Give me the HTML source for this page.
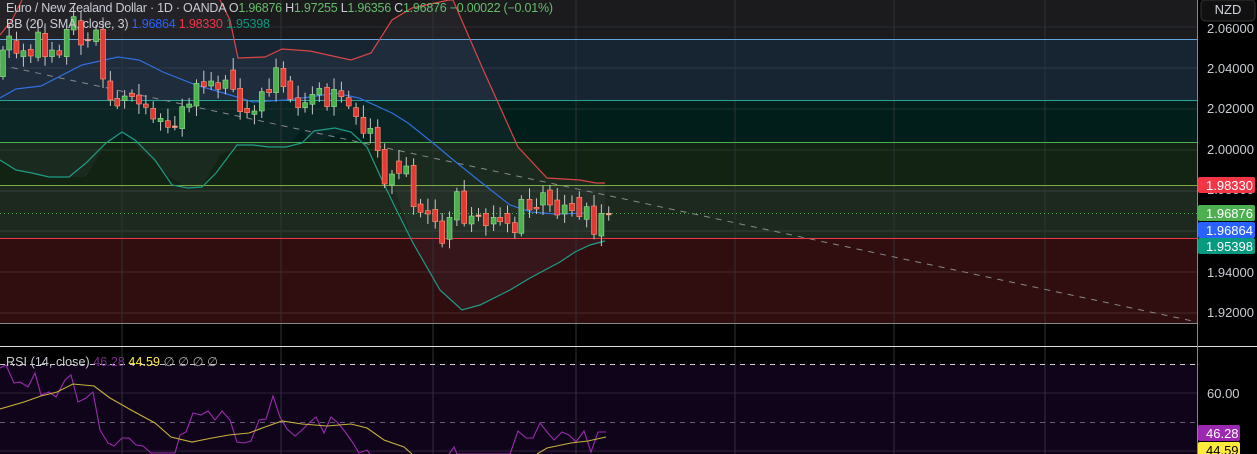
<!DOCTYPE html>
<html><head><meta charset="utf-8"><style>
html,body{margin:0;padding:0;background:#000;width:1257px;height:454px;overflow:hidden;font-family:"Liberation Sans",sans-serif}
svg{position:absolute;left:0;top:0}
.t{font-family:"Liberation Sans",sans-serif;font-size:13px}
.l{font-family:"Liberation Sans",sans-serif;font-size:12.5px}
</style></head><body>
<svg id="s" width="1257" height="454" xmlns="http://www.w3.org/2000/svg">
<rect x="0" y="0" width="1198" height="39" fill="#1b1b1d"/>
<rect x="0" y="39" width="1198" height="61" fill="#172533"/>
<rect x="0" y="100" width="1198" height="42" fill="#021e1b"/>
<rect x="0" y="142" width="1198" height="43" fill="#132313"/>
<rect x="0" y="185" width="1198" height="53" fill="#1d291e"/>
<rect x="0" y="238" width="1198" height="85" fill="#300e10"/>
<rect x="0" y="323" width="1198" height="23" fill="#000"/>
<rect x="0" y="364" width="1198" height="90" fill="#10041a"/>
<polygon fill="#8080a0" fill-opacity="0.08" points="0,0 220,0 230,20 238,58 265,57 282,49 310,51 351,60 371,53 392,20 412,8 449,0 453,0 482,67 518,147 547,178 580,180 596,183 605,183 605,241 590,245 575,252 560,262 545,270 530,278 510,290 480,305 462,310 440,290 413,243 395,190 368,131 352,129 330,137 314,145 302,130 286,148 269,147 237,146 220,155 202,187 188,188 170,177 122,132 106,143 86,177 49,177 32,173 16,170 0,160"/>
<g stroke-width="1">
<line x1="0" y1="27" x2="1198" y2="27" stroke="#2a2e39"/>
<line x1="0" y1="68" x2="1198" y2="68" stroke="#2d3a48"/>
<line x1="0" y1="109" x2="1198" y2="109" stroke="#1d3330"/>
<line x1="0" y1="150" x2="1198" y2="150" stroke="#2a3a2a"/>
<line x1="0" y1="191" x2="1198" y2="191" stroke="#354035"/>
<line x1="0" y1="231" x2="1198" y2="231" stroke="#354035"/>
<line x1="0" y1="272" x2="1198" y2="272" stroke="#4a2a2c"/>
<line x1="0" y1="313" x2="1198" y2="313" stroke="#4a2a2c"/>
<line x1="0" y1="393" x2="1198" y2="393" stroke="#2c2238"/>
<line x1="0" y1="451" x2="1198" y2="451" stroke="#2c2238"/>
<g stroke="#2f3236"><line x1="122" y1="0" x2="122" y2="454"/><line x1="281" y1="0" x2="281" y2="454"/><line x1="433" y1="0" x2="433" y2="454"/><line x1="576" y1="0" x2="576" y2="454"/><line x1="735" y1="0" x2="735" y2="454"/><line x1="894" y1="0" x2="894" y2="454"/><line x1="1045" y1="0" x2="1045" y2="454"/></g>
<line x1="0" y1="39.5" x2="1198" y2="39.5" stroke="#64a5e0"/>
<line x1="0" y1="100.5" x2="1198" y2="100.5" stroke="#26a69a"/>
<line x1="0" y1="142.5" x2="1198" y2="142.5" stroke="#4caf50"/>
<line x1="0" y1="185.5" x2="1198" y2="185.5" stroke="#8bc34a" stroke-opacity="0.85"/>
<line x1="0" y1="238.5" x2="1198" y2="238.5" stroke="#f23645"/>
<line x1="0" y1="323.5" x2="1198" y2="323.5" stroke="#888"/>
<line x1="0" y1="346.5" x2="1257" y2="346.5" stroke="#ddd"/>
<line x1="0" y1="364.5" x2="1198" y2="364.5" stroke="#ccc" stroke-dasharray="5,5"/>
<line x1="0" y1="422.5" x2="1198" y2="422.5" stroke="#6a5a7a" stroke-dasharray="5,5"/>
<line x1="0" y1="213.5" x2="1198" y2="213.5" stroke="#4caf50" stroke-dasharray="1,3"/>
<line x1="0" y1="65" x2="1197" y2="322" stroke="#888" stroke-dasharray="6,6"/>
<line x1="1197.5" y1="0" x2="1197.5" y2="454" stroke="#888"/>
</g>
<g fill="none" stroke-width="1.2">
<polyline stroke="#d94545" points="0,35 12,20 22,0"/>
<polyline stroke="#d94545" points="220,0 230,20 238,58 265,57 282,49 310,51 351,60 371,53 392,20 412,8 449,0 453,0 482,67 518,147 547,178 580,180 596,183 605,183"/>
<polyline stroke="#2f6fe0" points="0,98 16,89 41,86 82,65 118,57 139,60 163,72 196,85 220,92 237,97 253,102 286,100 310,97 335,93 359,98 392,113 408,123 433,143 457,163 482,183 510,205 531,212 555,214 588,213"/>
<polyline stroke="#1f9c87" points="0,160 16,170 32,173 49,177 69,177 86,163 106,143 122,132 135,140 155,160 172,185 188,188 202,187 216,173 237,145 253,145 269,147 286,147 302,143 314,131 335,128 351,132 367,147 382,180 395,207 413,243 440,290 462,310 480,305 510,290 530,278 545,270 560,262 575,252 590,245 605,241"/>
</g>
<g id="c"></g>
<g fill="none" stroke-width="1.1">
<polyline stroke="#9c2bb0" points="0,368 6,365 14,383 20,382 28,387 35,373 41,395 49,392 56,397 65,380 71,375 78,402 86,398 93,392 100,430 108,443 114,446 122,438 129,438 136,445 143,446 151,453 175,453 180,435 186,432 193,413 201,415 208,411 215,420 222,411 230,420 237,442 244,443 251,441 259,420 266,419 273,396 280,417 287,429 295,436 302,430 309,423 316,417 324,433 331,417 338,423 346,433 353,443 359,453 367,450 370,454"/>
<polyline stroke="#9c2bb0" points="449,454 454,447 457,454 510,454 518,431 526,438 533,438 540,423 547,432 554,440 562,432 569,435 576,442 584,431 591,452 598,432 606,432"/>
<polyline stroke="#c7b23a" points="0,409 24,402 41,396 57,392 73,384 94,386 110,398 131,410 155,423 171,437 192,442 212,438 229,435 249,433 265,427 282,421 302,424 327,426 351,424 367,428 384,440 404,447 412,454"/>
<polyline stroke="#c7b23a" points="537,454 547,448 571,443 588,441 606,437"/>
</g>
<text class="l" x="6" y="12" fill="#c9ccd4" textLength="547" lengthAdjust="spacing">Euro / New Zealand Dollar · 1D · OANDA  O<tspan fill="#66bb6a">1.96876</tspan> H<tspan fill="#66bb6a">1.97255</tspan> L<tspan fill="#66bb6a">1.96356</tspan> C<tspan fill="#66bb6a">1.96876</tspan> <tspan fill="#66bb6a">−0.00022 (−0.01%)</tspan></text>
<text class="l" x="6" y="28" fill="#c9ccd4" textLength="264" lengthAdjust="spacing">BB (20, SMA, close, 3) <tspan fill="#2962ff">1.96864</tspan> <tspan fill="#f23645">1.98330</tspan> <tspan fill="#089981">1.95398</tspan></text>
<text class="l" x="6" y="366" fill="#c9ccd4" textLength="212" lengthAdjust="spacing">RSI (14, close) <tspan fill="#7b2a90">46.28</tspan> <tspan fill="#ffeb3b">44.59</tspan> <tspan fill="#aaa">∅ ∅ ∅ ∅</tspan></text>
<rect x="1201" y="0" width="54" height="21" rx="4" fill="#111" stroke="#333"/>
<text class="t" x="1228" y="14" fill="#d1d4dc" text-anchor="middle">NZD</text>
<g class="t" fill="#c9ccd4">
<text x="1207" y="33">2.06000</text>
<text x="1207" y="73">2.04000</text>
<text x="1207" y="113">2.02000</text>
<text x="1207" y="154">2.00000</text>
<text x="1207" y="194">1.98000</text>
<text x="1207" y="277">1.94000</text>
<text x="1207" y="317">1.92000</text>
<text x="1207" y="398">60.00</text>
</g>
<rect x="1198" y="177" width="57" height="16" rx="2" fill="#f23645"/><text class="t" x="1206" y="190" fill="#fff">1.98330</text>
<rect x="1198" y="205" width="57" height="16" rx="2" fill="#4caf50"/><text class="t" x="1206" y="218" fill="#fff">1.96876</text>
<rect x="1198" y="222" width="57" height="16" rx="2" fill="#2962ff"/><text class="t" x="1206" y="235" fill="#fff">1.96864</text>
<rect x="1198" y="238" width="57" height="16" rx="2" fill="#089981"/><text class="t" x="1206" y="251" fill="#fff">1.95398</text>
<rect x="1198" y="425" width="42" height="16" rx="2" fill="#9c27b0"/><text class="t" x="1206" y="438" fill="#fff">46.28</text>
<rect x="1198" y="442" width="42" height="16" rx="2" fill="#ffeb3b"/><text class="t" x="1206" y="455" fill="#000">44.59</text>
</svg>
<script>
var d=[[0,'g',150,230],[15,'g',108,150],[33,'r',122,160],[50,'g',152,170],[68,'r',148,168],[86,'g',96,172],[103,'r',100,170],[120,'g',150,170],[138,'r',152,165],[156,'g',88,170],[173,'g',50,90],[191,'r',62,135],[208,'d',118,122],[228,'g',90,125],[245,'r',88,237],[263,'r',243,300],[280,'r',295,318],[298,'g',288,302],[316,'r',280,290],[333,'r',285,312],[350,'r',312,322],[368,'r',325,357],[386,'g',355,365],[404,'r',362,382],[421,'d',378,382],[439,'g',320,386],[456,'g',312,322],[474,'g',250,318],[492,'r',245,260],[510,'g',243,258],[527,'r',248,268],[545,'g',240,265],[564,'r',210,268],[581,'r',265,335],[598,'r',325,338],[616,'g',333,343],[634,'g',275,333],[652,'r',268,278],[669,'g',203,278],[687,'r',205,260],[704,'r',243,298],[723,'r',293,323],[740,'g',308,323],[758,'g',283,313],[775,'g',265,285],[794,'r',262,320],[811,'g',268,320],[829,'r',272,290],[847,'r',293,318],[865,'r',323,350],[883,'r',352,400],[900,'g',385,400],[918,'r',382,452],[935,'r',448,552],[953,'g',522,555],[970,'r',483,520],[988,'g',498,522],[1006,'r',496,620],[1023,'r',612,637],[1041,'r',632,642],[1059,'r',628,665],[1076,'r',663,730],[1094,'g',652,718],[1112,'g',575,660],[1130,'r',573,670],[1148,'g',648,672],[1165,'d',645,649],[1183,'r',640,677],[1202,'g',652,672],[1218,'r',652,665],[1236,'r',640,670],[1254,'r',668,698],[1270,'g',598,700],[1290,'r',598,630],[1307,'r',622,627],[1323,'g',578,615],[1340,'r',570,615],[1358,'r',600,645],[1376,'g',615,642],[1394,'r',610,632],[1412,'r',592,650],[1430,'g',620,658],[1448,'r',618,703],[1466,'g',640,708],[1484,'d',640,641]];
var h='';d.forEach(function(c,i){var x=c[0]/2.45+3,t=c[2]/3,b=c[3]/3;var w=4+((i*7)%9),w2=3+((i*5)%8);
h+='<line x1="'+x+'" y1="'+(t-w)+'" x2="'+x+'" y2="'+(b+w2)+'" stroke="#c8c8c8" stroke-width="1"/>';
var col=c[1]=='g'?'#4caf50':c[1]=='r'?'#e53935':'#e0b0a0';var st=c[1]=='g'?'#8fe08f':'#ff9a7a';
h+='<rect x="'+(x-2.5)+'" y="'+t+'" width="5" height="'+Math.max(1.5,b-t)+'" fill="'+col+'" stroke="'+st+'" stroke-width="0.6"/>';});
document.getElementById('c').innerHTML=h;
</script>
</body></html>
